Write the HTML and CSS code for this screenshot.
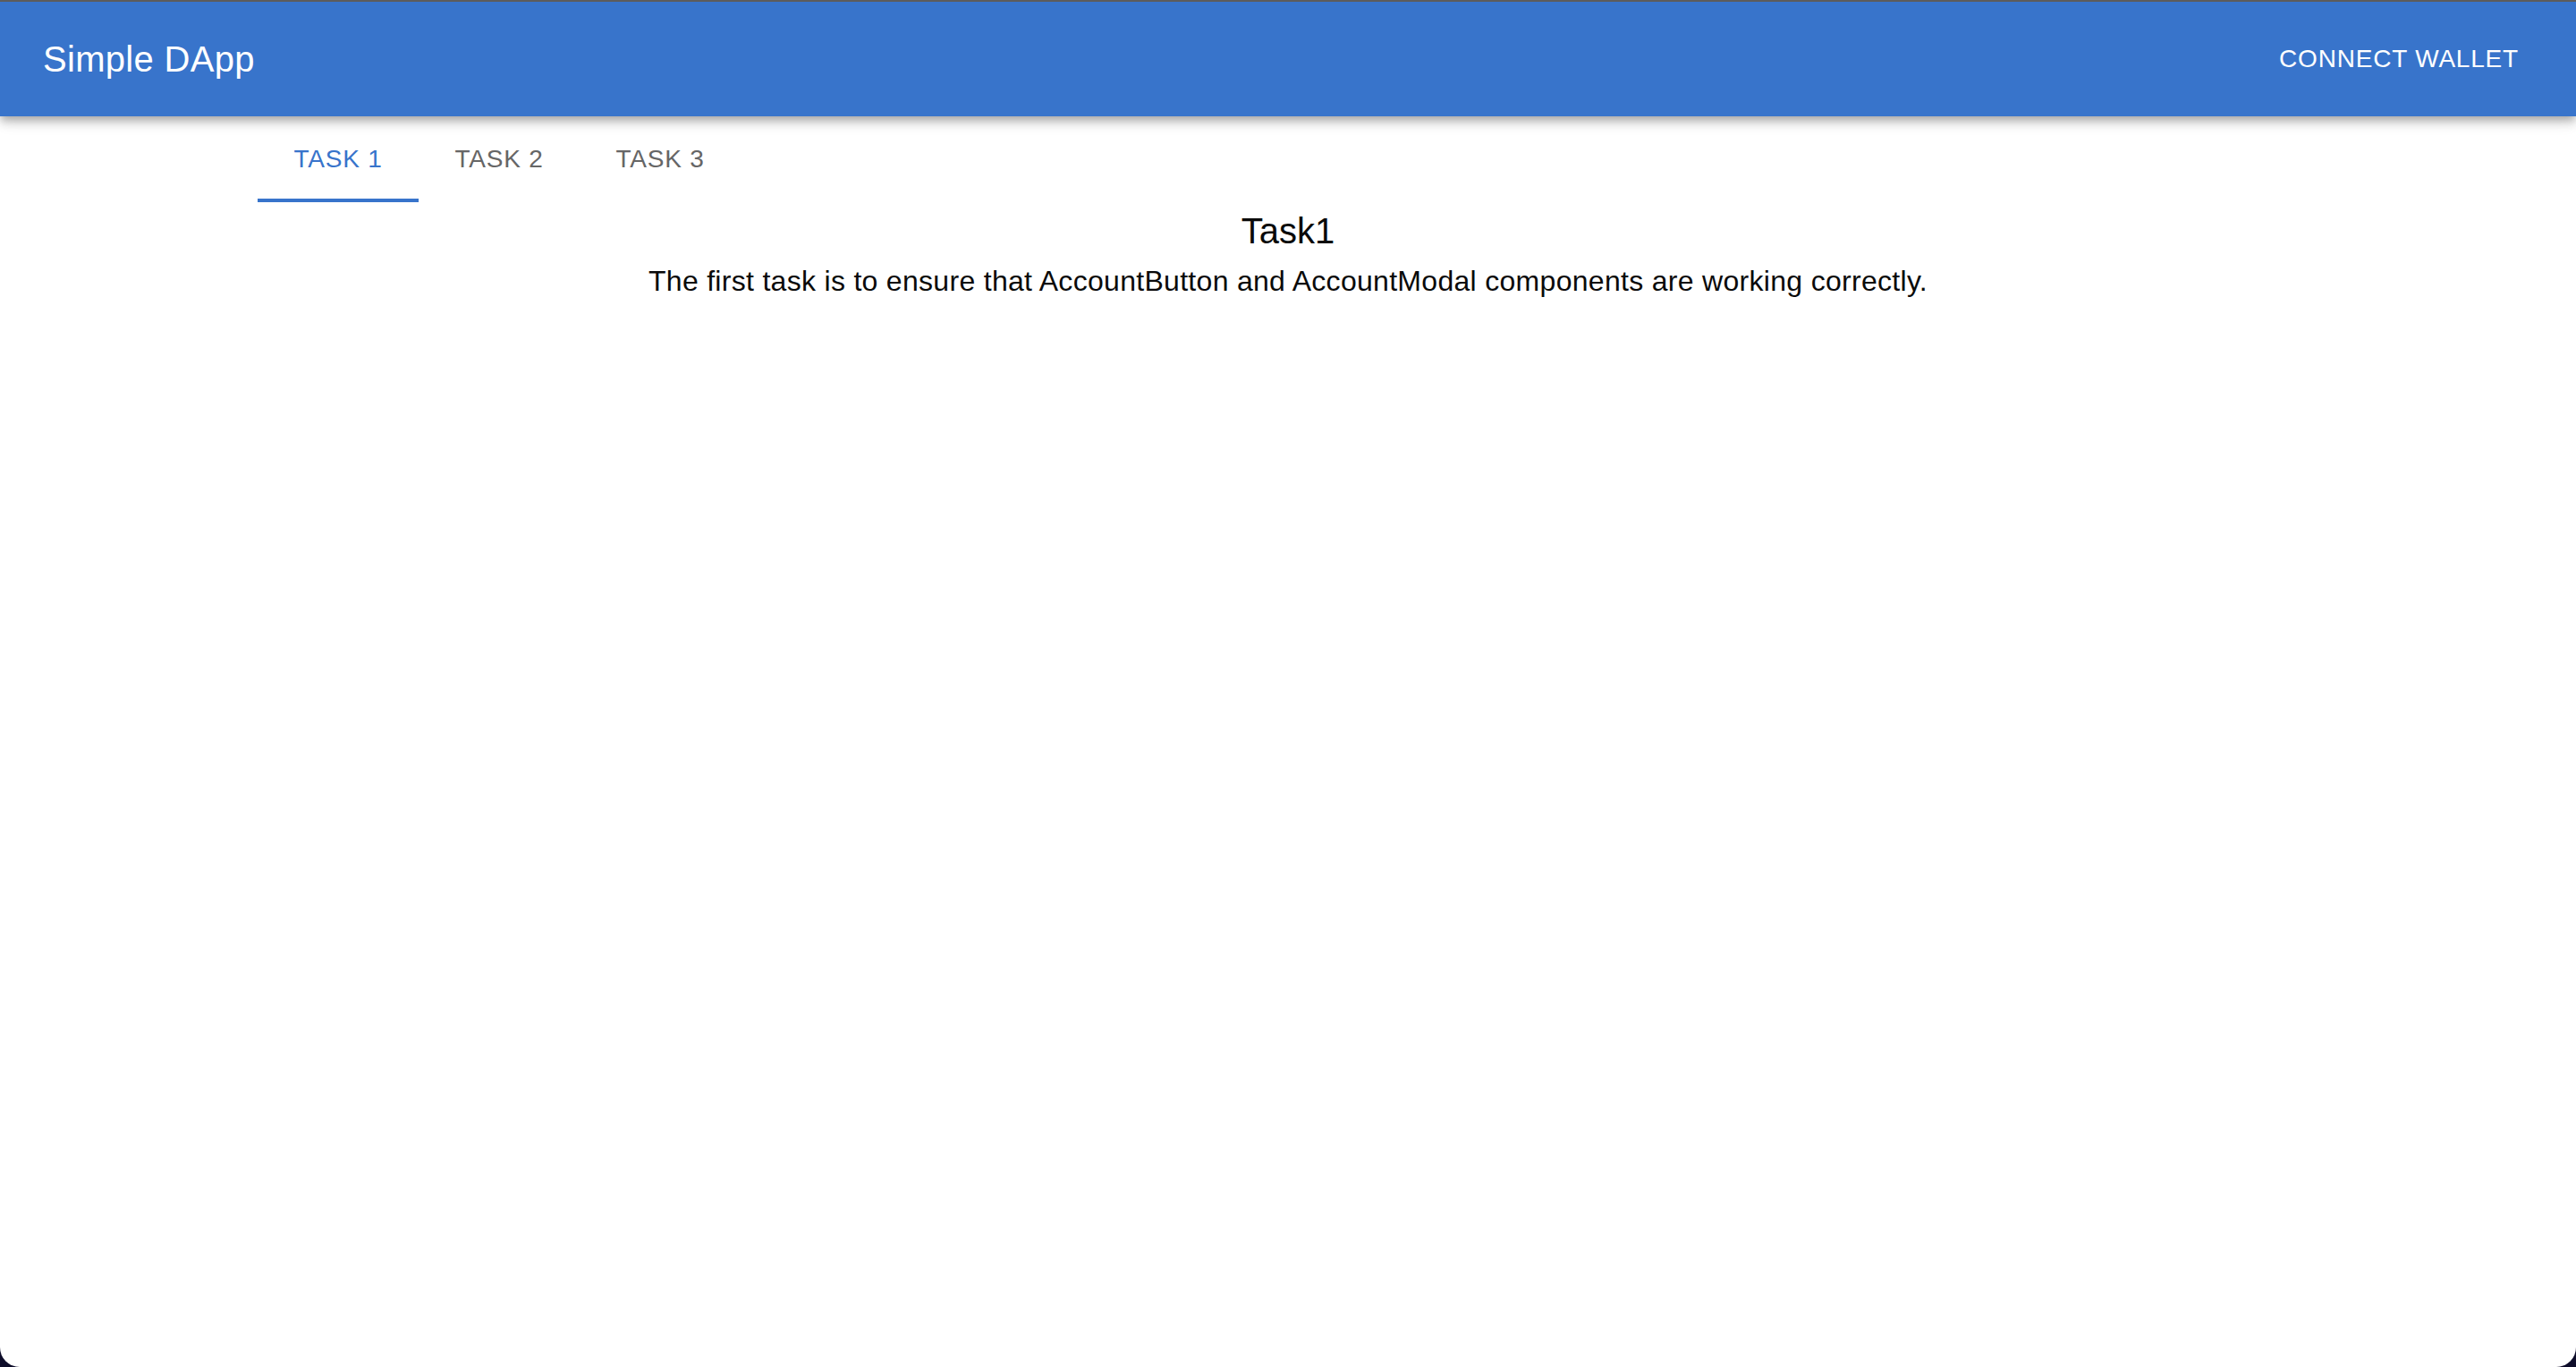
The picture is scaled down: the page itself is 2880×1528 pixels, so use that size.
FILE: index.html
```html
<!DOCTYPE html>
<html lang="en">
<head>
<meta charset="utf-8">
<title>Simple DApp</title>
<link rel="stylesheet" href="styles.css">
</head>
<body>
<div class="window">
  <header class="appbar">
    <div class="brand">Simple DApp</div>
    <button class="connect">CONNECT WALLET</button>
  </header>
  <main class="container">
    <nav class="tabs">
      <div class="tab active">TASK 1</div>
      <div class="tab">TASK 2</div>
      <div class="tab">TASK 3</div>
    </nav>
    <section class="panel">
      <h2 class="panel-title">Task1</h2>
      <p class="panel-text">The first task is to ensure that AccountButton and AccountModal components are working correctly.</p>
    </section>
  </main>
</div>
</body>
</html>
```

FILE: styles.css
```css
html, body {
  margin: 0;
  padding: 0;
}

body {
  background: #0e0d2a;
  font-family: "Liberation Sans", Arial, Helvetica, sans-serif;
}

.window {
  box-sizing: border-box;
  height: 1528px;
  background: #ffffff;
  border-top: 2px solid #5c5c5c;
  border-radius: 0 0 22px 22px;
  overflow: hidden;
}

.appbar {
  height: 128px;
  background: #3874cb;
  color: #ffffff;
  display: flex;
  align-items: center;
  justify-content: space-between;
  padding: 0 48px;
  box-shadow: 0 4px 8px -2px rgba(0, 0, 0, 0.2),
              0 8px 10px 0 rgba(0, 0, 0, 0.14),
              0 2px 20px 0 rgba(0, 0, 0, 0.12);
  position: relative;
  z-index: 1;
}

.brand {
  font-size: 40px;
  line-height: 64px;
  font-weight: 400;
  letter-spacing: 0.3px;
}

.connect {
  background: transparent;
  border: 0;
  color: #ffffff;
  font-family: inherit;
  font-size: 28px;
  letter-spacing: 0.8px;
  line-height: 48px;
  padding: 12px 16px;
  margin-right: 0;
  cursor: pointer;
}

.container {
  max-width: 2400px;
  margin: 0 auto;
  padding: 0 48px;
  box-sizing: border-box;
}

.tabs {
  display: flex;
  height: 96px;
}

.tab {
  width: 180px;
  box-sizing: border-box;
  display: flex;
  align-items: center;
  justify-content: center;
  font-size: 28px;
  letter-spacing: 0.8px;
  color: #666666;
  border-bottom: 4px solid transparent;
  padding-top: 4px;
}

.tab.active {
  color: #3874cb;
  border-bottom-color: #3874cb;
}

.panel {
  text-align: center;
  color: #0a0a0a;
}

.panel-title {
  margin: 0;
  font-size: 40px;
  line-height: 64px;
  font-weight: 400;
}

.panel-text {
  margin: 0;
  font-size: 32px;
  line-height: 48px;
  letter-spacing: 0.3px;
}
```
